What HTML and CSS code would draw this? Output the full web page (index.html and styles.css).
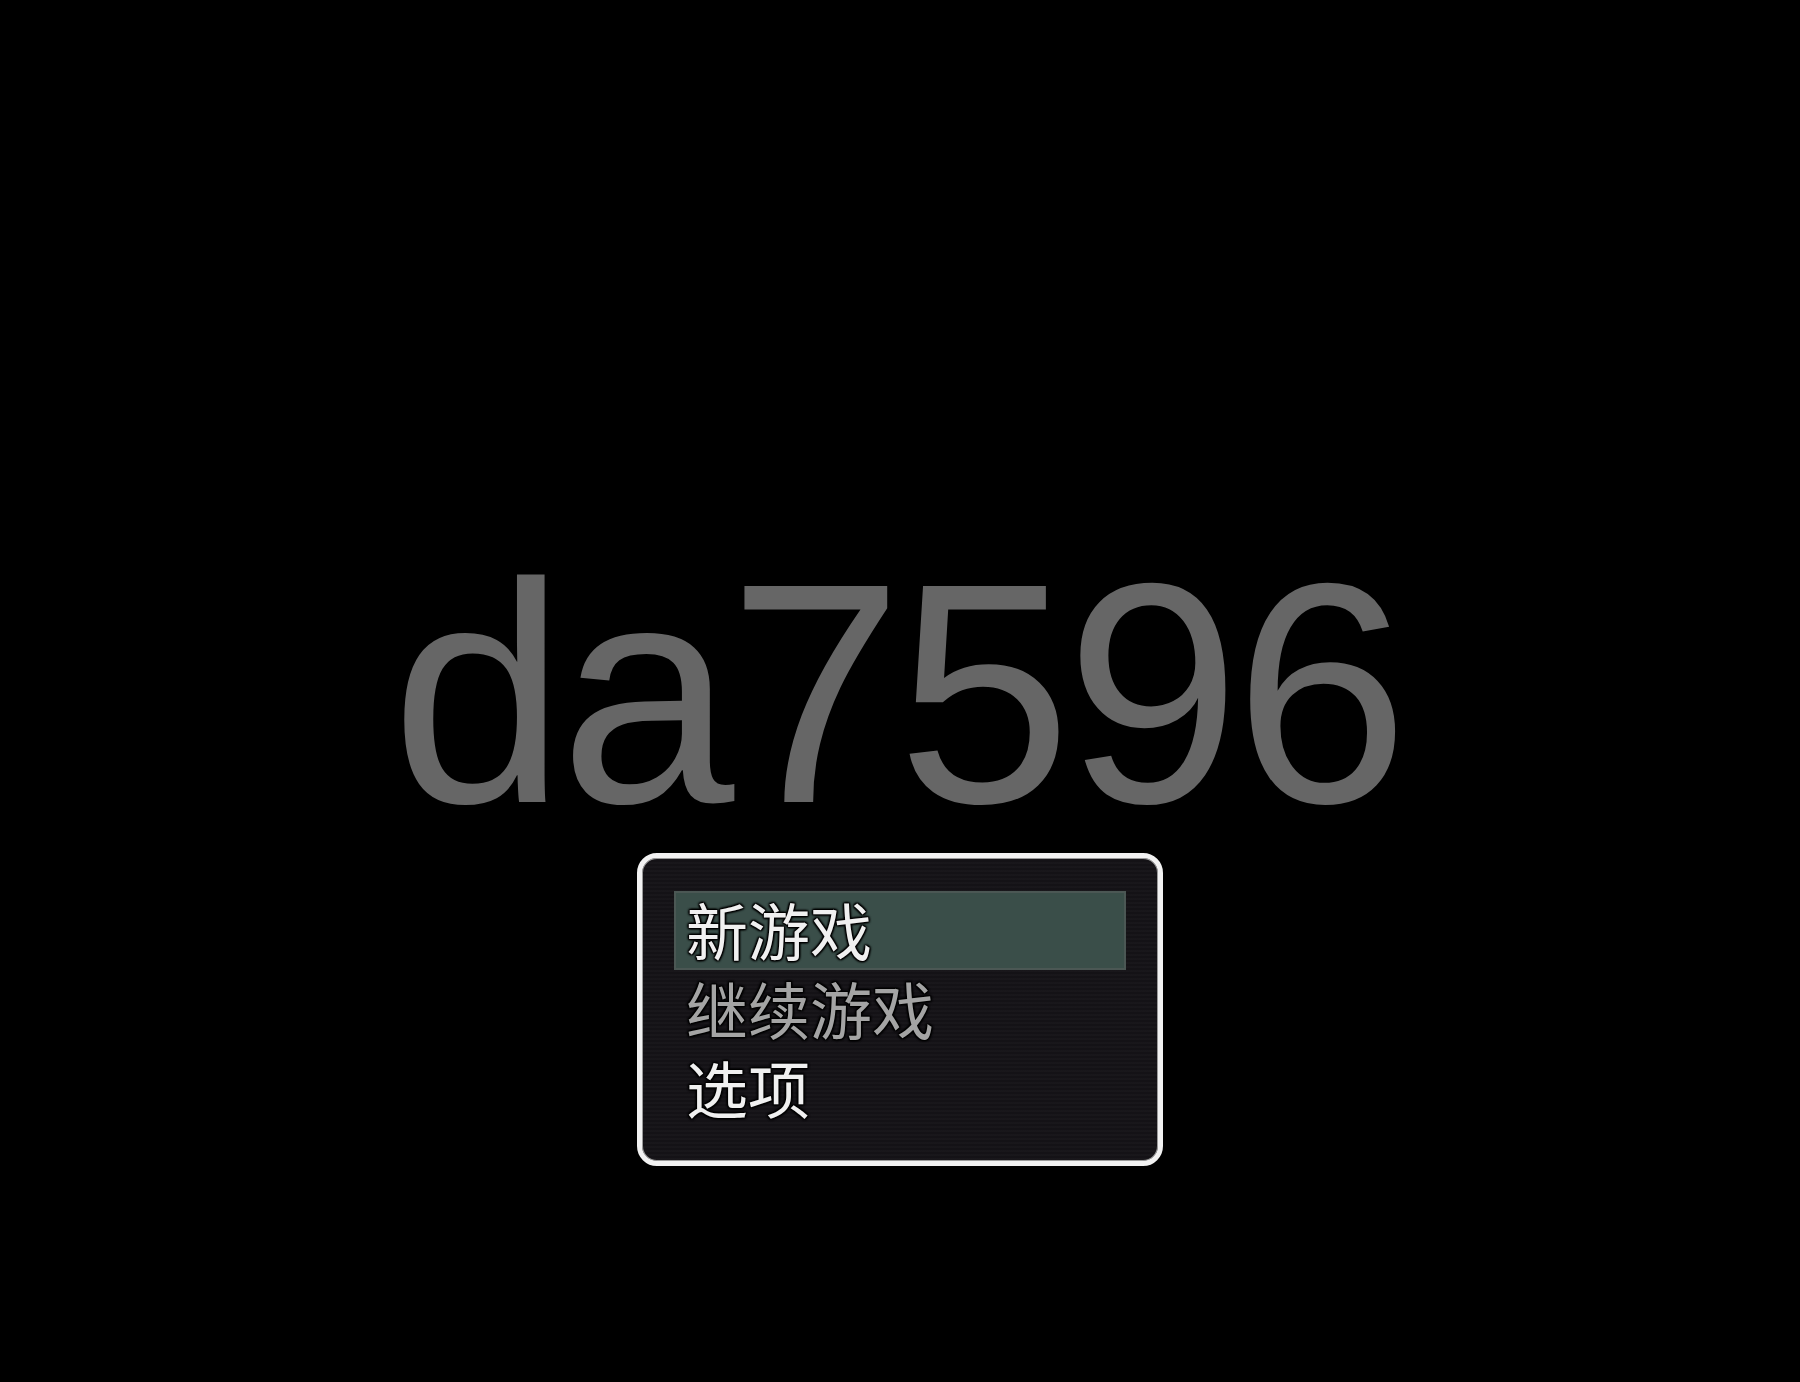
FILE: index.html
```html
<!DOCTYPE html>
<html lang="zh-CN">
<head>
<meta charset="utf-8">
<title>da7596</title>
<link rel="stylesheet" href="styles.css">
</head>
<body>
<main class="screen">
  <h1 class="title">da7596</h1>
  <nav class="menu">
    <div class="menu-item selected">新游戏</div>
    <div class="menu-item disabled">继续游戏</div>
    <div class="menu-item">选项</div>
  </nav>
</main>
</body>
</html>
```

FILE: styles.css
```css
html, body {
  margin: 0;
  padding: 0;
  background: #000;
}
.screen {
  width: 1800px;
  height: 1382px;
  box-sizing: border-box;
  padding-top: 537px;
  display: flex;
  flex-direction: column;
  align-items: center;
}
.title {
  margin: 0;
  font-family: "Liberation Sans", Arial, sans-serif;
  font-weight: 400;
  font-size: 314px;
  line-height: 314px;
  letter-spacing: -6px;
  text-indent: -6px;
  color: #666666;
}
.menu {
  margin-top: 2px;
  width: 526px;
  height: 313px;
  box-sizing: border-box;
  padding: 33px 32px 33px;
  border: 5px solid #f2f2f2;
  border-radius: 20px;
  background-color: #141216;
  background-image: repeating-linear-gradient(to bottom, rgba(255,255,255,0.018) 0px, rgba(255,255,255,0.018) 2px, rgba(0,0,0,0) 2px, rgba(0,0,0,0) 4px);
  box-shadow: inset 0 0 0 1px #9a9a9a;
  display: flex;
  flex-direction: column;
}
.menu-item {
  height: 79px;
  line-height: 77px;
  padding-left: 12px;
  font-family: "Noto Sans CJK SC", "Noto Sans", sans-serif;
  font-size: 62px;
  color: #f0f0f0;
  text-shadow: 0 0 2px #000, 0 0 3px #000, 1px 1px 2px #000, -1px -1px 2px #000, 1px -1px 2px #000, -1px 1px 2px #000;
}
.menu-item.selected {
  background: #3a4e49;
  box-shadow: inset 0 0 0 2px #4b5754;
}
.menu-item.disabled {
  color: #a4a4a4;
}
```
